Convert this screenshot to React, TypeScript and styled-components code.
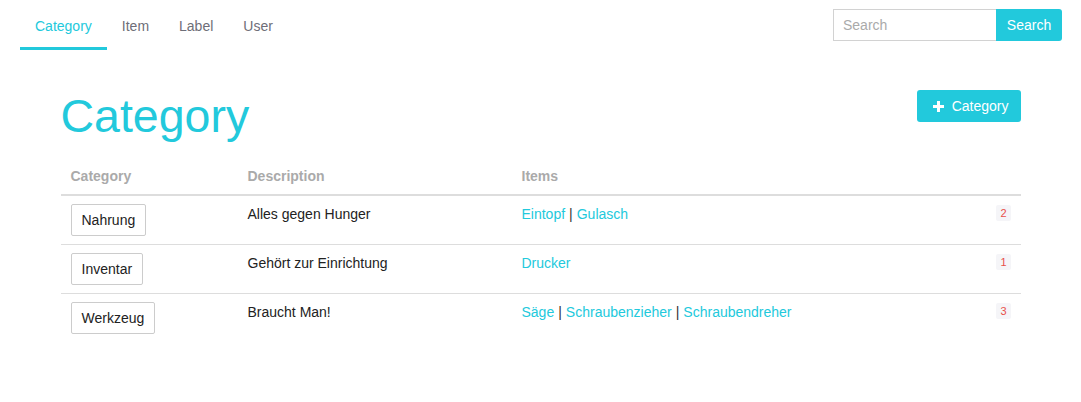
import React from "react";
import styled, { createGlobalStyle } from "styled-components";

const PRIMARY = "#22c9dc";

const Global = createGlobalStyle`
  html, body { margin: 0; padding: 0; background: #fff; }
  body { font-family: "Liberation Sans", Arial, sans-serif; font-size: 14px; color: #222; }
  * { box-sizing: border-box; }
`;

const Nav = styled.nav`
  display: flex;
  align-items: flex-start;
  justify-content: space-between;
  height: 49px;
  padding: 0 19px 0 20px;
`;

const Tabs = styled.div`
  display: flex;
  height: 50px;
`;

const Tab = styled.a<{ $active?: boolean }>`
  display: flex;
  align-items: center;
  padding: 4px 15px 0;
  height: 100%;
  font-size: 14px;
  color: ${(p) => (p.$active ? PRIMARY : "#6e6e78")};
  border-bottom: 3px solid ${(p) => (p.$active ? PRIMARY : "transparent")};
  text-decoration: none;
  cursor: pointer;
`;

const SearchForm = styled.form`
  display: flex;
  height: 32px;
  margin-top: 9px;
`;

const SearchInput = styled.input`
  width: 163px;
  height: 32px;
  border: 1px solid #d2d2d2;
  border-right: none;
  padding: 0 9px;
  font-family: inherit;
  font-size: 14px;
  color: #333;
  outline: none;
  &::placeholder { color: #aaa; }
`;

const SearchButton = styled.button`
  height: 32px;
  width: 66px;
  border: none;
  border-radius: 0 3px 3px 0;
  background: ${PRIMARY};
  color: #fff;
  font-family: inherit;
  font-size: 14px;
  padding: 0;
`;

const Container = styled.main`
  width: 960px;
  margin: 41px auto 0;
`;

const Header = styled.div`
  display: flex;
  justify-content: space-between;
  align-items: flex-start;
`;

const Title = styled.h1`
  margin: 1px 0 0;
  font-family: "Liberation Sans", Arial, sans-serif;
  font-weight: 400;
  font-size: 46.5px;
  line-height: 1.1;
  color: ${PRIMARY};
`;

const AddButton = styled.button`
  display: flex;
  align-items: center;
  gap: 8px;
  height: 32px;
  padding: 0 12px 0 16px;
  border: none;
  border-radius: 3px;
  background: ${PRIMARY};
  color: #fff;
  font-family: inherit;
  font-size: 14px;
`;

const Table = styled.table`
  width: 100%;
  margin-top: 16px;
  border-collapse: collapse;
`;

const Th = styled.th<{ $w?: number }>`
  text-align: left;
  padding: 8px 10px;
  line-height: 20px;
  font-size: 14px;
  font-weight: 700;
  color: #aaa;
  border-bottom: 2px solid #ddd;
  width: ${(p) => (p.$w ? `${p.$w}px` : "auto")};
`;

const Tr = styled.tr<{ $last?: boolean }>`
  border-bottom: ${(p) => (p.$last ? "none" : "1px solid #ddd")};
`;

const Td = styled.td<{ $right?: boolean }>`
  padding: 8px 10px;
  line-height: 20px;
  vertical-align: top;
  font-size: 14px;
  color: #222;
  text-align: ${(p) => (p.$right ? "right" : "left")};
`;

const CatButton = styled.button`
  height: 32px;
  padding: 0 10px;
  background: #fff;
  border: 1px solid #ccc;
  border-radius: 2px;
  font-family: inherit;
  font-size: 14px;
  color: #222;
`;

const ItemLink = styled.a`
  color: ${PRIMARY};
  text-decoration: none;
  cursor: pointer;
`;

const Sep = styled.span`
  color: #333;
  margin: 0 4px;
`;

const Count = styled.code`
  display: inline-block;
  padding: 1px 4px;
  font-family: "Liberation Sans", Arial, sans-serif;
  font-size: 11px;
  line-height: 14px;
  color: #e8504a;
  background: #f5f5f8;
  border-radius: 2px;
  vertical-align: top;
  margin-top: 1px;
`;

const PlusIcon = () => (
  <svg width="11" height="11" viewBox="0 0 11 11" aria-hidden="true">
    <rect x="4" y="0" width="3" height="11" fill="#fff" />
    <rect x="0" y="4" width="11" height="3" fill="#fff" />
  </svg>
);

const rows = [
  { name: "Nahrung", desc: "Alles gegen Hunger", items: ["Eintopf", "Gulasch"] },
  { name: "Inventar", desc: "Gehört zur Einrichtung", items: ["Drucker"] },
  { name: "Werkzeug", desc: "Braucht Man!", items: ["Säge", "Schraubenzieher", "Schraubendreher"] },
];

export default function App() {
  return (
    <>
      <Global />
      <Nav>
        <Tabs>
          <Tab $active>Category</Tab>
          <Tab>Item</Tab>
          <Tab>Label</Tab>
          <Tab>User</Tab>
        </Tabs>
        <SearchForm onSubmit={(e) => e.preventDefault()}>
          <SearchInput placeholder="Search" />
          <SearchButton type="submit">Search</SearchButton>
        </SearchForm>
      </Nav>
      <Container>
        <Header>
          <Title>Category</Title>
          <AddButton>
            <PlusIcon />
            Category
          </AddButton>
        </Header>
        <Table>
          <thead>
            <tr>
              <Th $w={177}>Category</Th>
              <Th $w={274}>Description</Th>
              <Th>Items</Th>
              <Th $w={40}></Th>
            </tr>
          </thead>
          <tbody>
            {rows.map((r, i) => (
              <Tr key={r.name} $last={i === rows.length - 1}>
                <Td>
                  <CatButton>{r.name}</CatButton>
                </Td>
                <Td>{r.desc}</Td>
                <Td>
                  {r.items.map((it, j) => (
                    <React.Fragment key={it}>
                      {j > 0 && <Sep>|</Sep>}
                      <ItemLink>{it}</ItemLink>
                    </React.Fragment>
                  ))}
                </Td>
                <Td $right>
                  <Count>{r.items.length}</Count>
                </Td>
              </Tr>
            ))}
          </tbody>
        </Table>
      </Container>
    </>
  );
}
